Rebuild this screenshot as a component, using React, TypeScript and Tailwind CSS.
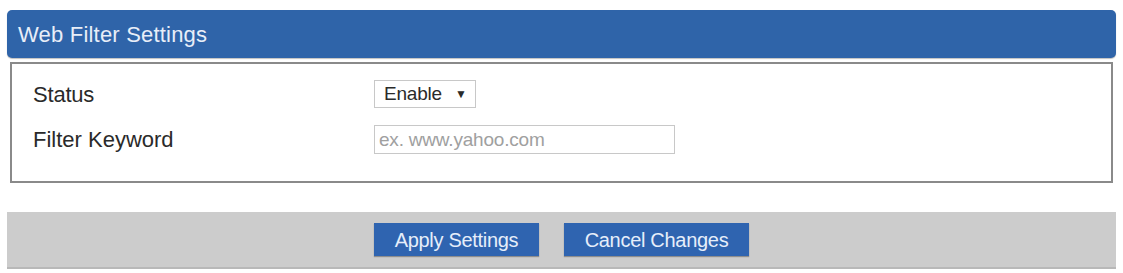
export default function App() {
  return (
    <div
      className="w-[1123px] h-[273px] bg-white pt-[10px] px-[7px]"
      style={{ fontFamily: '"Liberation Sans", Arial, sans-serif' }}
    >
      {/* Header */}
      <div className="h-[48px] rounded-[5px] bg-[#2f64a9] flex items-center px-[11px] shadow-[0_1px_1px_rgba(0,0,0,0.25)]">
        <span className="text-[22px] tracking-[0.2px] text-[#e8eef8]">Web Filter Settings</span>
      </div>

      {/* Settings box */}
      <div className="mx-[3px] mt-[4px] h-[121px] border-2 border-[#8a8a8a] bg-white pt-[16px] pl-[21px]">
        <div className="flex items-center h-[28px]">
          <span className="w-[341px] text-[22px] tracking-[-0.2px] text-[#2a2a2a]">Status</span>
          <div className="w-[102px] h-[28px] border border-[#c8c8c8] flex items-center pl-[9px] text-[19px] tracking-[-0.2px] text-[#2a2a2a]">
            Enable
            <span className="ml-[13px] text-[12px]">▼</span>
          </div>
        </div>
        <div className="flex items-center h-[29px] mt-[17px]">
          <span className="w-[341px] text-[22px] text-[#2a2a2a]">Filter Keyword</span>
          <input
            className="w-[301px] h-[29px] border border-[#c8c8c8] pl-[4px] text-[19px] tracking-[-0.2px] outline-none placeholder:text-[#a0a0a0]"
            placeholder="ex. www.yahoo.com"
          />
        </div>
      </div>

      {/* Action bar */}
      <div className="mt-[29px] h-[57px] bg-[#cccccc] border-b-2 border-[#b8b8b8] flex items-center justify-center gap-[25px]">
        <button className="w-[165px] h-[33px] bg-[#2f64b0] text-[20px] tracking-[-0.3px] text-[#e6eefa] shadow-[0_1px_1px_rgba(0,0,0,0.3)]">
          Apply Settings
        </button>
        <button className="w-[185px] h-[33px] bg-[#2f64b0] text-[20px] tracking-[-0.3px] text-[#e6eefa] shadow-[0_1px_1px_rgba(0,0,0,0.3)]">
          Cancel Changes
        </button>
      </div>
    </div>
  );
}
